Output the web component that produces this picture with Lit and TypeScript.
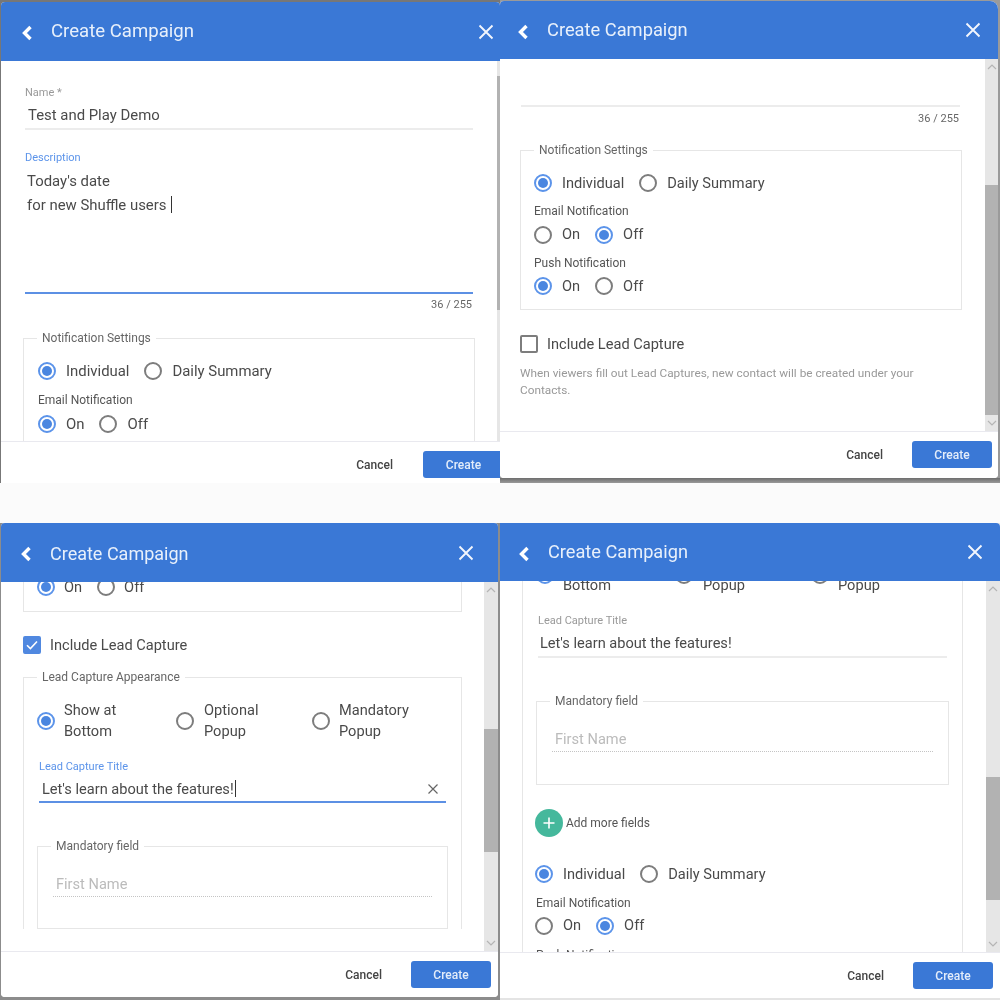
import { LitElement, html, css } from "lit";
import { customElement } from "lit/decorators.js";

@customElement("app-root")
export class AppRoot extends LitElement {
  static styles = css`
    :host { display: grid; grid-template-columns: 500px 500px; grid-template-rows: 483px 477px; row-gap: 40px; width: 1000px; height: 1000px; background: #fbfbfb; font-family: Roboto, "Liberation Sans", sans-serif; color: #4a4a4a; overflow: hidden; filter: blur(0.35px); --fs: 14.6px; }
    .tile { display: flex; min-width: 0; min-height: 0; overflow: hidden; }
    .tile.tl { background: #777; padding: 2px 0 0 1px; --fs: 14.9px; }
    .tile.tr { background: linear-gradient(#9a9a9a 0 478px, #6e6e6e 478px, #999 483px); padding: 1px 2px 5px 0; }
    .tile.bl { background: #8c8c8c; padding: 0 2px 3px 1px; }
    .tile.br { background: #e4e4e4; padding: 0 0 2px 0; }
    .dialog { flex: 1; min-width: 0; display: flex; flex-direction: column; background: #fff; border-radius: 4px 4px 0 0; overflow: hidden; }
    .tr .dialog { border-radius: 4px 8px 4px 4px; }
    .bl .dialog { border-radius: 4px; }
    .br .dialog { border-radius: 0 4px 0 0; }

    .head { flex: none; height: 59px; background: #3a78d6; display: flex; align-items: center; padding: 0 6px 0 20px; color: #e8f0fb; position: relative; z-index: 1; }
    .tr .head, .br .head { height: 58px; }
    .tile.tr .head { padding-left: 17px; padding-right: 17px; }
    .tile.tl .head { padding-right: 6px; }
    .tile.bl .head { padding-left: 19px; padding-right: 24px; }
    .tile.br .head { padding-left: 18px; padding-right: 17px; }
    .back { width: 12px; height: 16px; flex: none; margin-top: 3px; }
    .title { font-size: 18.6px; margin-left: 18px; flex: 1; padding-bottom: 1px; }
    .tile.tr .title { font-size: 18.3px; }
    .tile.bl .title { font-size: 18px; padding-bottom: 0; padding-top: 1px; }
    .tile.br .title { font-size: 18.2px; }
    .close { width: 16px; height: 16px; flex: none; }

    .main { flex: 1; min-height: 0; display: flex; }
    .scroll { flex: 1; min-width: 0; padding: 0 22px; overflow: hidden; }
    .tile.tr .scroll { padding: 0 23px 0 20px; }
    .tile.br .scroll { padding: 0 23px 0 22px; }

    .bar { flex: none; width: 13px; background: #e6e6e6; display: flex; flex-direction: column; align-items: center; }
    .tile.tl .bar { width: 3px; }
    .tile.bl .bar, .tile.br .bar { width: 14px; }
    .arrow { flex: none; height: 16px; width: 100%; display: flex; align-items: center; justify-content: center; }
    .arrow svg { width: 10px; height: 6px; }
    .thumb { background: #b2b2b2; width: 100%; flex: none; }
    .track { flex: 1; min-height: 0; width: 100%; display: flex; flex-direction: column; }
    .tile.tl .track { padding-top: 15px; }
    .tile.tl .thumb { height: 234px; }
    .tile.tr .track { padding-top: 110px; }
    .tile.tr .thumb { height: 230px; }
    .tile.bl .track { padding-top: 131px; }
    .tile.bl .thumb { height: 123px; }
    .tile.br .track { padding-top: 180px; }
    .tile.br .thumb { height: 123px; }

    .foot { flex: none; height: 47px; border-top: 1px solid #e9e9ef; display: flex; justify-content: flex-end; align-items: flex-start; gap: 29px; padding: 9px 6px 0 0; background: #fff; box-sizing: border-box; position: relative; z-index: 1; }
    .tile.tl .foot { height: 42px; padding-right: 0; gap: 30px; }
    .tile.bl .foot { height: 46px; padding-right: 7px; }
    .tile.br .foot { height: 46px; padding-right: 7px; }
    .cancel { font-size: 12px; font-weight: 500; color: #444; line-height: 28px; }
    .create { width: 80px; height: 27px; border-radius: 3px; background: #3a78d6; color: #e4edfa; font-size: 12px; font-weight: 500; display: flex; align-items: center; justify-content: center; flex: none; }
    .tile.tl .create { width: 77px; border-radius: 3px 0 0 3px; padding-left: 4px; box-sizing: border-box; }

    .field { margin: 0 2px; }
    .lbl { font-size: 11px; line-height: 14px; color: #999; }
    .lbl.on { color: #5c94ea; }
    .val { font-size: var(--fs); line-height: 24px; color: #4a4a4a; padding-left: 3px; margin-top: 4px; display: flex; align-items: center; }
    .tile.br .val { padding-left: 2px; }
    .val .txt { flex: 1; }
    .line { height: 2px; background: #ececec; margin-top: 1px; }
    .line.on { background: #5c90e4; }
    .area { font-size: var(--fs); line-height: 24px; height: 122px; padding-left: 2px; box-sizing: border-box; color: #4a4a4a; margin-top: 4px; }
    .caret { display: inline-block; width: 1px; height: 17px; background: #333; vertical-align: -3px; margin-left: 1px; }
    .count { font-size: 11px; line-height: 14px; text-align: right; color: #666; margin: 4px 3px 19px 0; }
    .x { width: 12px; height: 12px; flex: none; margin-right: 7px; }

    fieldset { margin: 0; padding: 14px 13px 11px; border: 1px solid #e6e6e6; min-width: 0; }
    .tile.tl fieldset { padding-left: 14px; }
    legend { font-size: 12px; line-height: 14px; padding: 0 5px; margin-left: 0; color: #666; }
    .tile.tl legend { margin-left: -1px; }
    .frag { border-top: 0; padding-top: 0; padding-bottom: 12px; }
    .open { border-bottom: 0; }
    .row { display: flex; align-items: center; gap: 15px; height: 24px; }
    .opt { display: flex; align-items: center; gap: 10px; font-size: var(--fs); line-height: 21px; color: #4a4a4a; }
    .tile.bl .opt { gap: 9px; }
    .ring { width: 18px; height: 18px; box-sizing: border-box; border: 2px solid #7d7d7d; border-radius: 50%; flex: none; display: flex; align-items: center; justify-content: center; }
    .ring.on { border-color: #5c94ea; }
    .ring.on::after { content: ""; width: 10px; height: 10px; border-radius: 50%; background: #4a86e0; }
    .sub { font-size: 12px; line-height: 14px; color: #555; margin: 9px 0 4.5px; }
    .tile.tl .sub { margin: 10px 0 5px; }
    .tile.br .sub { margin: 10px 0 3.5px; }
    .three { display: grid; grid-template-columns: 139px 136px 1fr; height: 42px; align-items: center; margin-top: 2px; }
    .three .opt { gap: 9px; }
    .three .opt + .opt { gap: 10px; }
    .three .opt + .opt + .opt { gap: 9px; }

    .check { display: flex; align-items: center; gap: 9px; margin-top: 24px; font-size: var(--fs); line-height: 18px; color: #4a4a4a; }
    .tile.tr .check { margin-top: 25px; }
    .box { width: 18px; height: 18px; box-sizing: border-box; border: 2px solid #7d7d7d; border-radius: 2px; flex: none; display: flex; align-items: center; justify-content: center; }
    .box.on { background: #5088e0; border-color: #5088e0; }
    .box svg { width: 12px; height: 10px; }
    .help { font-size: 11.8px; line-height: 17px; color: #999; margin-top: 12px; padding-right: 40px; }

    .title-f { margin-top: 18px; }
    .title-f .val { margin-top: 3px; }
    .tile.bl .title-f .line { margin-top: 0; }
    .mand { margin-top: 36px; padding: 19px 15px 31px; }
    .tile.br .mand { padding-bottom: 32px; }
    .mand legend { margin-left: 0; margin-inline-start: -2px; }
    .ph { font-size: var(--fs); line-height: 24px; color: #bbb; padding-left: 3px; }
    .dots { border-bottom: 1px dotted #c4c4c4; }
    .add { display: flex; align-items: center; gap: 3px; margin-top: 24px; font-size: 12px; color: #555; }
    .plus { width: 28px; height: 28px; border-radius: 50%; background: #45b89c; flex: none; display: flex; align-items: center; justify-content: center; }
    .plus svg { width: 12px; height: 12px; }
    .tile.br .add, .tile.br .row { margin-left: -1px; }

    .pad-tl { padding-top: 25px; }
    .pad-tl + .field .val { margin-top: 3px; }
    .name { margin-bottom: 21px; }
    .pad-tr { height: 46px; margin: 0 2px 0 1px; border-bottom: 2px solid #ececec; }
    .count.tr { margin-top: 5px; margin-bottom: 17px; }
    .up-bl { margin-top: -7px; }
    .up-br { margin-top: -29px; }
    .gap-a { margin-top: 16px; }
    .gap-b { margin-top: 25px; }
    .open.outer { padding-bottom: 0; }
  `;

  private radio(label: unknown, on = false) {
    return html`<div class="opt"><span class="ring ${on ? "on" : ""}"></span><span>${label}</span></div>`;
  }
  private pair(a: string, b: string, first: boolean) {
    return html`<div class="row">${this.radio(a, first)}${this.radio(b, !first)}</div>`;
  }
  private head() {
    return html`<div class="head">
      <svg class="back" viewBox="0 0 12 16"><path d="M9.5 2 3.5 8l6 6" fill="none" stroke="#fff" stroke-width="3.4"/></svg>
      <div class="title">Create Campaign</div>
      <svg class="close" viewBox="0 0 16 16"><path d="M1.5 1.5l13 13M14.5 1.5l-13 13" fill="none" stroke="#f2f6fd" stroke-width="1.9"/></svg>
    </div>`;
  }
  private foot() {
    return html`<div class="foot"><div class="cancel">Cancel</div><div class="create">Create</div></div>`;
  }
  private bar(arrows = true) {
    const up = html`<div class="arrow"><svg viewBox="0 0 10 6"><path d="M1 5l4-4 4 4" fill="none" stroke="#b5b5b5" stroke-width="1.2"/></svg></div>`;
    const down = html`<div class="arrow"><svg viewBox="0 0 10 6"><path d="M1 1l4 4 4-4" fill="none" stroke="#b5b5b5" stroke-width="1.2"/></svg></div>`;
    return html`<div class="bar">${arrows ? up : ""}<div class="track"><div class="thumb"></div></div>${arrows ? down : ""}</div>`;
  }
  private three() {
    return html`<div class="three">
      ${this.radio(html`Show at<br />Bottom`, true)}
      ${this.radio(html`Optional<br />Popup`)}
      ${this.radio(html`Mandatory<br />Popup`)}
    </div>`;
  }
  private mandatory() {
    return html`<fieldset class="mand"><legend>Mandatory field</legend>
      <div class="ph">First Name</div><div class="dots"></div>
    </fieldset>`;
  }

  render() {
    return html`
      <div class="tile tl"><div class="dialog">
        ${this.head()}
        <div class="main">
          <div class="scroll">
            <div class="pad-tl"></div>
            <div class="field name">
              <div class="lbl">Name *</div>
              <div class="val"><span class="txt">Test and Play Demo</span></div>
              <div class="line"></div>
            </div>
            <div class="field">
              <div class="lbl on">Description</div>
              <div class="area">Today's date<br />for new Shuffle users <span class="caret"></span></div>
              <div class="line on"></div>
            </div>
            <div class="count">36 / 255</div>
            <fieldset class="open"><legend>Notification Settings</legend>
              ${this.pair("Individual", "Daily Summary", true)}
              <div class="sub">Email Notification</div>
              ${this.pair("On", "Off", true)}
            </fieldset>
          </div>
          ${this.bar(false)}
        </div>
        ${this.foot()}
      </div></div>

      <div class="tile tr"><div class="dialog">
        ${this.head()}
        <div class="main">
          <div class="scroll">
            <div class="pad-tr"></div>
            <div class="count tr">36 / 255</div>
            <fieldset><legend>Notification Settings</legend>
              ${this.pair("Individual", "Daily Summary", true)}
              <div class="sub">Email Notification</div>
              ${this.pair("On", "Off", false)}
              <div class="sub">Push Notification</div>
              ${this.pair("On", "Off", true)}
            </fieldset>
            <div class="check"><span class="box"></span>Include Lead Capture</div>
            <div class="help">When viewers fill out Lead Captures, new contact will be created under your Contacts.</div>
          </div>
          ${this.bar()}
        </div>
        ${this.foot()}
      </div></div>

      <div class="tile bl"><div class="dialog">
        ${this.head()}
        <div class="main">
          <div class="scroll">
            <fieldset class="frag">
              <div class="up-bl">${this.pair("On", "Off", true)}</div>
            </fieldset>
            <div class="check"><span class="box on"><svg viewBox="0 0 12 10"><path d="M1 5.2 4.4 8.5 11 1.5" fill="none" stroke="#fff" stroke-width="1.6"/></svg></span>Include Lead Capture</div>
            <fieldset class="open outer gap-a"><legend>Lead Capture Appearance</legend>
              ${this.three()}
              <div class="field title-f">
                <div class="lbl on">Lead Capture Title</div>
                <div class="val"><span class="txt">Let's learn about the features!<span class="caret"></span></span>
                  <svg class="x" viewBox="0 0 12 12"><path d="M1.5 1.5l9 9M10.5 1.5l-9 9" fill="none" stroke="#666" stroke-width="1.2"/></svg>
                </div>
                <div class="line on"></div>
              </div>
              ${this.mandatory()}
            </fieldset>
          </div>
          ${this.bar()}
        </div>
        ${this.foot()}
      </div></div>

      <div class="tile br"><div class="dialog">
        ${this.head()}
        <div class="main">
          <div class="scroll">
            <fieldset class="frag open outer">
              <div class="up-br">${this.three()}</div>
              <div class="field title-f">
                <div class="lbl">Lead Capture Title</div>
                <div class="val"><span class="txt">Let's learn about the features!</span></div>
                <div class="line"></div>
              </div>
              ${this.mandatory()}
              <div class="add"><span class="plus"><svg viewBox="0 0 12 12"><path d="M6 0.5v11M0.5 6h11" fill="none" stroke="#fff" stroke-width="1.6"/></svg></span>Add more fields</div>
              <div class="gap-b">${this.pair("Individual", "Daily Summary", true)}</div>
              <div class="sub">Email Notification</div>
              ${this.pair("On", "Off", false)}
              <div class="sub">Push Notification</div>
            </fieldset>
          </div>
          ${this.bar()}
        </div>
        ${this.foot()}
      </div></div>
    `;
  }
}
